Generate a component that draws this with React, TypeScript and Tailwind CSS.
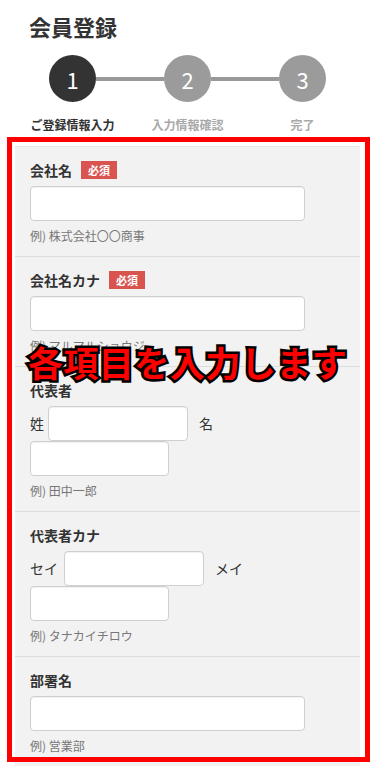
import React from 'react'

const font = { fontFamily: '"Noto Sans CJK JP", "Noto Sans", sans-serif' }

const steps = [
  { num: '1', label: 'ご登録情報入力', active: true },
  { num: '2', label: '入力情報確認', active: false },
  { num: '3', label: '完了', active: false },
]

function Badge() {
  return (
    <span className="ml-[9px] inline-flex h-[18px] w-[36px] items-center justify-center bg-[#d9534f] text-[11px] font-bold leading-none text-white">
      必須
    </span>
  )
}

function Section({
  label,
  required,
  hint,
  children,
  last,
}: {
  label: string
  required?: boolean
  hint: string
  children: React.ReactNode
  last?: boolean
}) {
  return (
    <div className={`px-[15px] pt-[13px] pb-[11px] ${last ? '' : 'border-b border-[#dcdcdc]'}`}>
      <div className="flex h-5 items-center text-[14px] font-bold leading-5 text-[#333]">
        {label}
        {required && <Badge />}
      </div>
      <div className="mt-[6px]">{children}</div>
      <div className="mt-[6px] text-[12px] leading-[18px] text-[#777]">{hint}</div>
    </div>
  )
}

function Input({ className = 'w-[275px]' }: { className?: string }) {
  return (
    <input
      type="text"
      className={`block h-[35px] rounded-[4px] border border-[#cfcfcf] bg-white shadow-[inset_0_1px_1px_rgba(0,0,0,0.06)] ${className}`}
    />
  )
}

function NameRow({ first, second, gapFirst }: { first: string; second: string; gapFirst: string }) {
  return (
    <div className="flex flex-wrap items-center text-[14px] text-[#333]">
      <span>{first}</span>
      <Input className={`w-[140px] ${gapFirst}`} />
      <span className="ml-[11px] mr-[40px]">{second}</span>
      <Input className="w-[139px]" />
    </div>
  )
}

export default function App() {
  return (
    <div className="relative min-h-[767px] bg-white" style={font}>
      <h1 className="px-[29px] pt-[10px] text-[22px] font-bold leading-[32px] text-[#333]">会員登録</h1>

      <div className="mx-[15px] mt-[13px] flex">
        {steps.map((s, i) => (
          <div key={s.num} className="flex w-[115px] flex-col items-center">
            <div className="flex w-full items-center">
              <div className={`h-[4px] flex-1 ${i === 0 ? 'bg-transparent' : 'bg-[#999]'}`} />
              <div
                className={`flex h-[47px] w-[47px] items-center justify-center rounded-full text-[22px] leading-none text-white ${
                  s.active ? 'bg-[#333]' : 'bg-[#9b9b9b]'
                }`}
              >
                {s.num}
              </div>
              <div className={`h-[4px] flex-1 ${i === 2 ? 'bg-transparent' : 'bg-[#999]'}`} />
            </div>
            <div
              className={`mt-[15px] text-[12px] font-bold leading-4 ${s.active ? 'text-[#333]' : 'text-[#aaa]'}`}
            >
              {s.label}
            </div>
          </div>
        ))}
      </div>

      <div className="mx-[15px] mt-[13px] border-t border-[#e6e6e6] bg-[#f2f2f2]">
        <Section label="会社名" required hint="例) 株式会社〇〇商事">
          <Input />
        </Section>
        <Section label="会社名カナ" required hint="例) マルマルショウジ">
          <Input />
        </Section>
        <Section label="代表者" hint="例) 田中一郎">
          <NameRow first="姓" second="名" gapFirst="ml-[4px]" />
        </Section>
        <Section label="代表者カナ" hint="例) タナカイチロウ">
          <NameRow first="セイ" second="メイ" gapFirst="ml-[6px]" />
        </Section>
        <Section label="部署名" hint="例) 営業部" last>
          <Input />
        </Section>
      </div>

      {/* annotation overlay */}
      <div className="pointer-events-none absolute left-[7px] top-[137px] h-[625px] w-[363px] border-[5px] border-[#ff0000]" />
      <div className="pointer-events-none absolute left-0 top-[342px] w-full text-center text-[35px] font-bold leading-[40px] tracking-[0.5px] text-[#ff0000] [-webkit-text-stroke:5px_#000] [paint-order:stroke_fill]">
        各項目を入力します
      </div>
    </div>
  )
}
